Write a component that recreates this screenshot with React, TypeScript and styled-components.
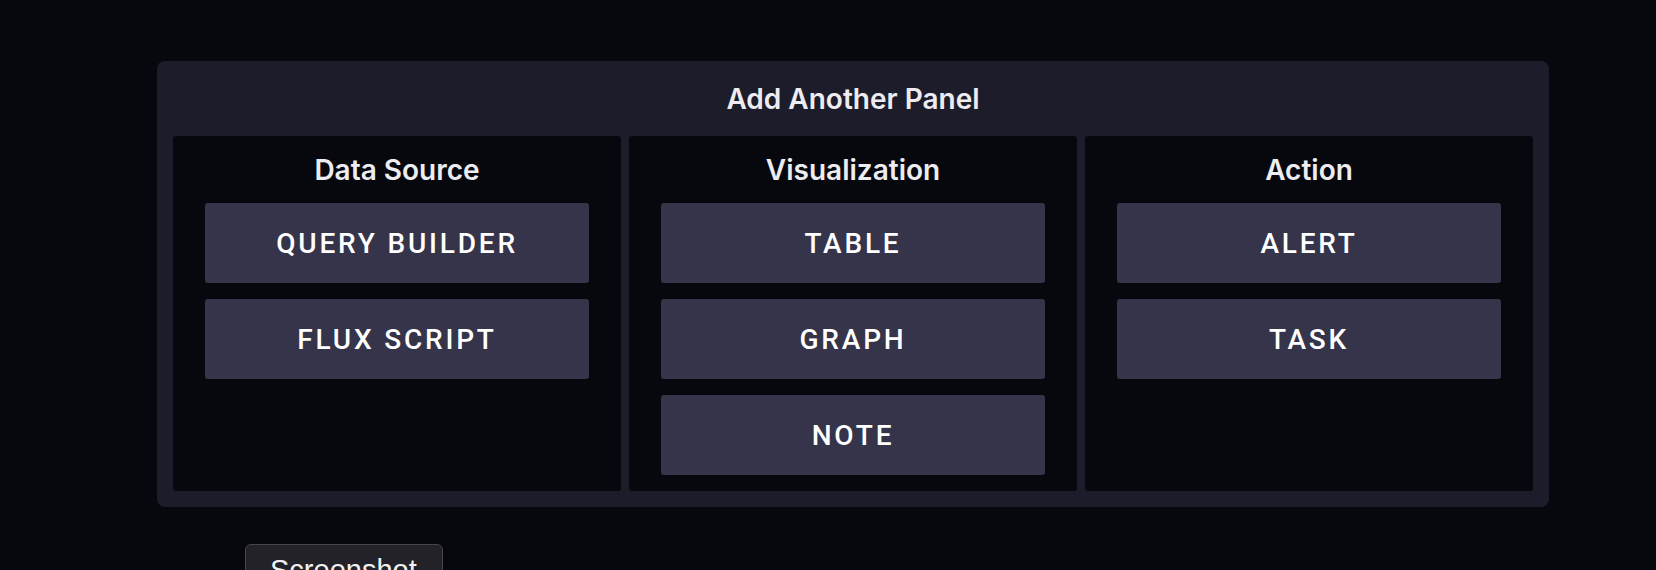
import React from "react";
import styled, { createGlobalStyle } from "styled-components";

const GlobalStyle = createGlobalStyle`
  html, body {
    margin: 0;
    padding: 0;
    background: #07080d;
    overflow: hidden;
  }
  * { box-sizing: border-box; }
`;

const Page = styled.div`
  height: 570px;
  padding: 61px 107px 0 157px;
  display: flex;
  flex-direction: column;
  align-items: flex-start;
`;

const Panel = styled.section`
  width: 1392px;
  background: #1d1c2b;
  border-radius: 8px;
  padding: 16px;
  display: flex;
  flex-direction: column;
`;

const PanelTitle = styled.h2`
  margin: 0 0 17px;
  height: 42px;
  line-height: 44px;
  text-align: center;
  font-family: Inter, "Noto Sans", sans-serif;
  font-weight: 600;
  font-size: 28px;
  color: #ececf1;
`;

const Columns = styled.div`
  display: grid;
  grid-template-columns: repeat(3, 1fr);
  gap: 8px;
`;

const Column = styled.div`
  background: #07080d;
  border-radius: 3px;
  padding: 16px 32px;
  display: flex;
  flex-direction: column;
  gap: 16px;
  min-height: 355px;
`;

const ColumnTitle = styled.h3`
  margin: 0 0 1px;
  height: 34px;
  line-height: 36px;
  text-align: center;
  font-family: Inter, "Noto Sans", sans-serif;
  font-weight: 600;
  font-size: 28px;
  color: #ececf1;
`;

const OptionButton = styled.button`
  height: 80px;
  width: 100%;
  border: none;
  border-radius: 3px;
  background: #35344a;
  color: #ffffff;
  font-family: Roboto, "Noto Sans", sans-serif;
  font-weight: 500;
  font-size: 28px;
  letter-spacing: 0.1em;
  text-transform: uppercase;
  cursor: pointer;
  padding: 0;
`;

const ShotButton = styled.button`
  margin: 37px 0 0 88px;
  width: 198px;
  height: 48px;
  flex-shrink: 0;
  padding: 4px 0 0 24px;
  text-align: left;
  background: #222228;
  border: 1px solid #47464e;
  border-radius: 6px;
  color: #f2f2f4;
  font-family: "Liberation Sans", Arial, sans-serif;
  font-size: 29px;
  cursor: pointer;
`;

const groups = [
  { title: "Data Source", items: ["Query Builder", "Flux Script"] },
  { title: "Visualization", items: ["Table", "Graph", "Note"] },
  { title: "Action", items: ["Alert", "Task"] },
];

export default function App() {
  return (
    <>
      <GlobalStyle />
      <Page>
        <Panel>
          <PanelTitle>Add Another Panel</PanelTitle>
          <Columns>
            {groups.map((g) => (
              <Column key={g.title}>
                <ColumnTitle>{g.title}</ColumnTitle>
                {g.items.map((it) => (
                  <OptionButton key={it}>{it}</OptionButton>
                ))}
              </Column>
            ))}
          </Columns>
        </Panel>
        <ShotButton>Screenshot</ShotButton>
      </Page>
    </>
  );
}
